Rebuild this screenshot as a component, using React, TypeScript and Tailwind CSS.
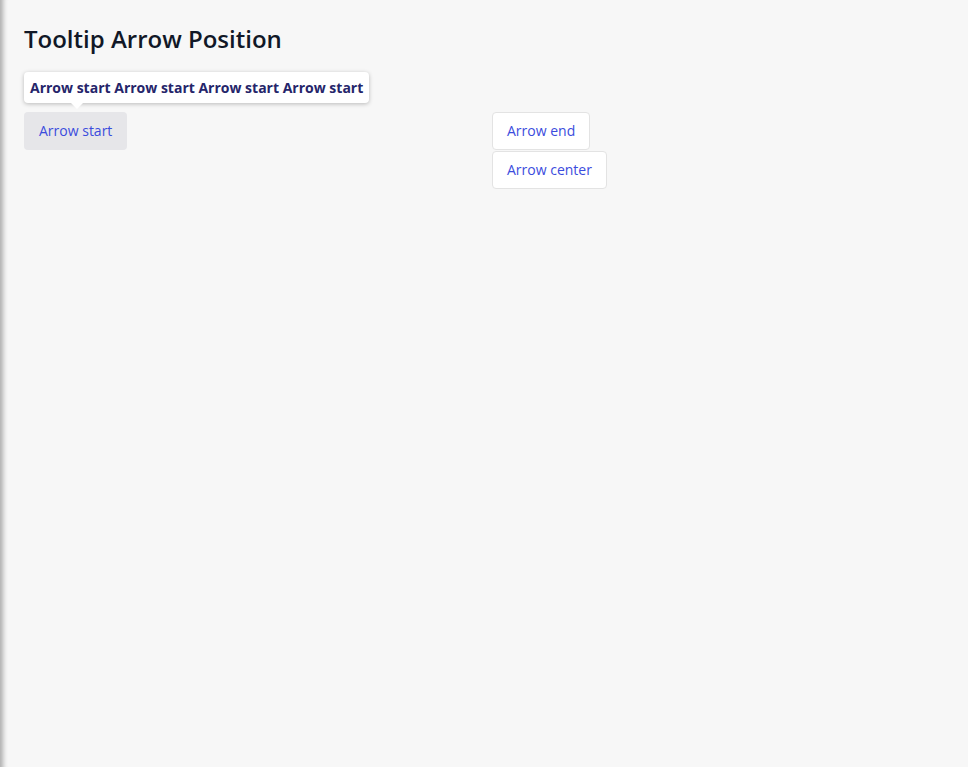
import React from 'react';

const font = { fontFamily: '"Open Sans", "Noto Sans", sans-serif' };

const App: React.FC = () => {
  return (
    <div
      className="min-h-screen bg-[#f7f7f7] p-6 shadow-[inset_8px_0_5px_-5px_rgba(0,0,0,0.3)]"
      style={font}
    >
      <h1 className="-mt-[1px] text-[24px] font-semibold leading-8 text-[#111827]">Tooltip Arrow Position</h1>

      <div className="grid grid-cols-2 gap-4 mt-[17px]">
        <div className="flex flex-col items-start">
          {/* tooltip */}
          <div className="relative rounded bg-white px-[6px] pt-[6px] pb-[5px] shadow-[0_1px_4px_rgba(0,0,0,0.25)]">
            <span className="block text-sm font-bold leading-5 text-[#25256a] whitespace-nowrap">
              Arrow start Arrow start Arrow start Arrow start
            </span>
            <span className="absolute left-[47px] -bottom-[6px] h-0 w-0 border-x-[6px] border-t-[6px] border-x-transparent border-t-white" />
          </div>
          <button className="mt-[9px] rounded bg-[#e6e6e9] px-[15px] py-[9px] text-sm leading-5 text-[#3b4cdd]">
            Arrow start
          </button>
        </div>

        <div className="flex flex-col items-start pt-[40px]">
          <button className="rounded border border-[#e3e3e3] bg-white px-[14px] py-[8px] text-sm leading-5 text-[#3b4cdd]">
            Arrow end
          </button>
          <button className="mt-[1px] rounded border border-[#e3e3e3] bg-white px-[14px] py-[8px] text-sm leading-5 text-[#3b4cdd]">
            Arrow center
          </button>
        </div>
      </div>
    </div>
  );
};

export default App;
